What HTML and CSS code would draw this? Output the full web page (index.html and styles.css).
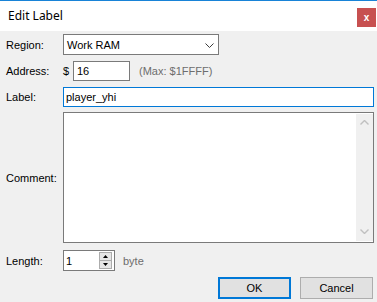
FILE: index.html
```html
<!DOCTYPE html>
<html lang="en">
<head>
	<meta charset="UTF-8">
	<title>Edit Label</title>
	<link rel="stylesheet" href="styles.css">
</head>
<body>
	<div class="window">
		<div class="titlebar">
			<span class="title">Edit Label</span>
			<span class="close">x</span>
		</div>
		<div class="content">
			<div class="row row-region">
				<span class="lbl">Region:</span>
				<div class="combo">
					<span>Work RAM</span>
					<svg class="chev" width="9" height="5" viewBox="0 0 9 5"><path d="M0.5 0.5 L4.5 4.5 L8.5 0.5" fill="none" stroke="#3c3c3c" stroke-width="1"/></svg>
				</div>
			</div>
			<div class="row row-address">
				<span class="lbl">Address:</span>
				<span class="dollar">$</span>
				<div class="field addr">16</div>
				<span class="hint">(Max: $1FFFF)</span>
			</div>
			<div class="row row-label">
				<span class="lbl">Label:</span>
				<div class="field focus">player_yhi</div>
			</div>
			<div class="row row-comment">
				<span class="lbl">Comment:</span>
				<div class="memo">
					<div class="vscroll">
						<svg width="9" height="5" viewBox="0 0 9 5"><path d="M0.5 4.5 L4.5 0.5 L8.5 4.5" fill="none" stroke="#c0c0c0" stroke-width="1.4"/></svg>
						<svg width="9" height="5" viewBox="0 0 9 5"><path d="M0.5 0.5 L4.5 4.5 L8.5 0.5" fill="none" stroke="#c0c0c0" stroke-width="1.4"/></svg>
					</div>
				</div>
			</div>
			<div class="row row-length">
				<span class="lbl">Length:</span>
				<div class="spin">
					<span class="val">1</span>
					<div class="spinbtns">
						<div class="sbtn"><svg width="5" height="3" viewBox="0 0 5 3"><path d="M0 3 L2.5 0 L5 3 Z" fill="#000"/></svg></div>
						<div class="sbtn"><svg width="5" height="3" viewBox="0 0 5 3"><path d="M0 0 L2.5 3 L5 0 Z" fill="#000"/></svg></div>
					</div>
				</div>
				<span class="hint byte">byte</span>
			</div>
			<div class="buttons">
				<div class="btn default">OK</div>
				<div class="btn">Cancel</div>
			</div>
		</div>
	</div>
</body>
</html>
```

FILE: styles.css
```css
*{margin:0;padding:0;box-sizing:border-box;}
body{
	background:#f0f0f0;
	font-family:"Liberation Sans",Arial,sans-serif;
	font-size:11px;
	color:#000;
}
.window{
	width:377px;
	height:302px;
	display:flex;
	flex-direction:column;
	background:#f0f0f0;
}
.titlebar{
	height:31px;
	border-top:1px solid #1883d7;
	background:#fff;
	display:flex;
	align-items:flex-start;
	justify-content:space-between;
}
.title{
	font-family:"Noto Sans","Open Sans",sans-serif;
	font-size:12px;
	margin-left:8px;
	margin-top:6px;
}
.close{
	width:19px;
	height:19px;
	margin-top:7px;
	margin-right:1px;
	background:#c75050;
	color:#fff;
	font-weight:bold;
	font-size:10px;
	display:flex;
	align-items:center;
	justify-content:center;
	line-height:1;
}
.content{
	padding:3px 3px 0 6px;
	display:flex;
	flex-direction:column;
}
.row{
	display:flex;
	align-items:center;
}
.lbl{
	width:57px;
	flex-shrink:0;
}
.row-region{height:21px;margin-bottom:6px;}
.row-address{height:20px;margin-bottom:6px;}
.row-label{height:20px;margin-bottom:5px;}
.row-comment{height:131px;margin-bottom:7px;}
.row-length{height:21px;margin-bottom:6px;}

.combo{
	width:156px;
	height:21px;
	border:1px solid #7a7a7a;
	background:#fff;
	display:flex;
	align-items:center;
	justify-content:space-between;
	padding:0 4px 0 3px;
}
.chev{margin-top:1px;}
.dollar{width:10px;}
.field{
	height:20px;
	background:#fff;
	border:1px solid #7a7a7a;
	display:flex;
	align-items:center;
	padding-left:3px;
}
.addr{width:57px;}
.focus{
	flex:1;
	border-color:#0078d7;
	padding-left:2px;
}
.hint{
	color:#6d6d6d;
	margin-left:9px;
}
.byte{margin-left:8px;}
.memo{
	flex:1;
	height:131px;
	background:#fff;
	border:1px solid #7a7a7a;
	display:flex;
	justify-content:flex-end;
	padding:1px 0 1px 0;
}
.vscroll{
	width:17px;
	background:#f0f0f0;
	display:flex;
	flex-direction:column;
	align-items:center;
	justify-content:space-between;
	padding:6px 0 7px;
}
.spin{
	width:52px;
	height:21px;
	background:#fff;
	border:1px solid #7a7a7a;
	display:flex;
	align-items:center;
	justify-content:space-between;
	padding:1px 2px 1px 2px;
}
.spinbtns{
	width:13px;
	height:100%;
	display:flex;
	flex-direction:column;
}
.sbtn{
	flex:1;
	background:#e6e6e6;
	border:1px solid #acacac;
	display:flex;
	align-items:center;
	justify-content:center;
}
.sbtn + .sbtn{border-top:0;}
.buttons{
	display:flex;
	justify-content:flex-end;
	gap:9px;
	margin-right:1px;
}
.btn{
	width:73px;
	height:22px;
	background:#e1e1e1;
	border:1px solid #adadad;
	display:flex;
	align-items:center;
	justify-content:center;
}
.btn.default{
	border:2px solid #0078d7;
}
```
